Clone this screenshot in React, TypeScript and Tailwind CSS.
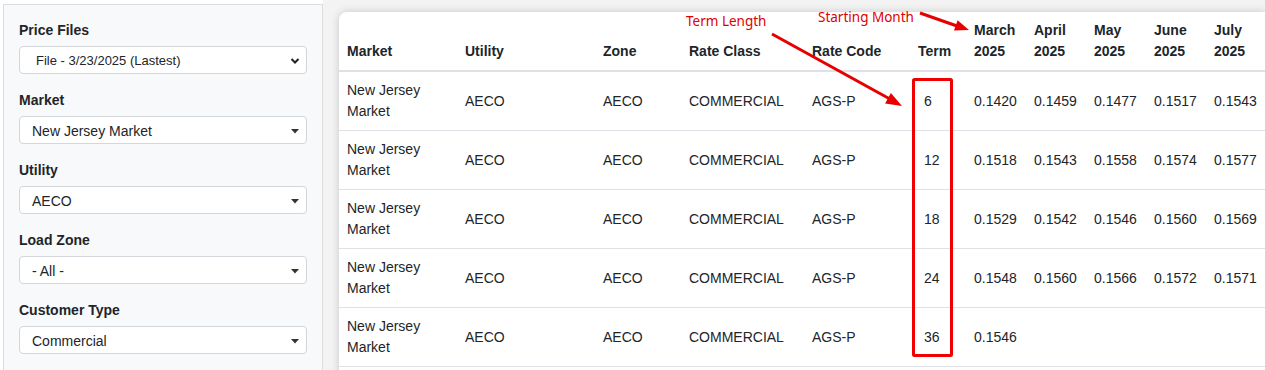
import type { ReactNode } from 'react';

const months = ['March', 'April', 'May', 'June', 'July'];

const rows = [
  { term: 6, prices: ['0.1420', '0.1459', '0.1477', '0.1517', '0.1543'] },
  { term: 12, prices: ['0.1518', '0.1543', '0.1558', '0.1574', '0.1577'] },
  { term: 18, prices: ['0.1529', '0.1542', '0.1546', '0.1560', '0.1569'] },
  { term: 24, prices: ['0.1548', '0.1560', '0.1566', '0.1572', '0.1571'] },
  { term: 36, prices: ['0.1546'] },
];

function Field({ label, children }: { label: string; children: ReactNode }) {
  return (
    <div className="mb-[16px]">
      <div className="mb-[5px] text-[14px] leading-[21px] font-bold">{label}</div>
      {children}
    </div>
  );
}

// native-looking select (chevron)
function NativeSelect({ value }: { value: string }) {
  return (
    <div className="flex h-[28px] items-center justify-between rounded-[4px] border border-[#d3d6da] bg-white pt-[2px] pr-[6px] pl-[16px] text-[13px]">
      <span>{value}</span>
      <svg width="10" height="8" viewBox="0 0 10 8">
        <path d="M1.5 2 L5 5.5 L8.5 2" fill="none" stroke="#222" strokeWidth="2" />
      </svg>
    </div>
  );
}

// select2-style (small caret)
function Select2({ value }: { value: string }) {
  return (
    <div className="flex h-[28px] items-center justify-between rounded-[4px] border border-[#d3d6da] bg-white pt-[2px] pr-[7px] pl-[12px] text-[14px]">
      <span>{value}</span>
      <svg width="8" height="5" viewBox="0 0 8 5">
        <path d="M0 0 L8 0 L4 4.5 Z" fill="#333" />
      </svg>
    </div>
  );
}

export default function App() {
  return (
    <div className="relative flex h-[370px] w-[1265px] overflow-hidden bg-white font-['Liberation_Sans',Arial,sans-serif] text-[14px] text-[#212529]">
      <aside className="mt-[4px] ml-[3px] h-[400px] w-[320px] shrink-0 border border-[#dcdcdc] bg-[#f8f9fa] px-[15px] pt-[15px]">
        <Field label="Price Files">
          <NativeSelect value="File - 3/23/2025 (Lastest)" />
        </Field>
        <Field label="Market">
          <Select2 value="New Jersey Market" />
        </Field>
        <Field label="Utility">
          <Select2 value="AECO" />
        </Field>
        <Field label="Load Zone">
          <Select2 value="- All -" />
        </Field>
        <Field label="Customer Type">
          <Select2 value="Commercial" />
        </Field>
      </aside>

      <main className="min-w-0 flex-1 bg-[#f3f3f3] pt-[12px] pl-[16px]">
        <div className="h-[400px] overflow-hidden rounded-tl-lg bg-white shadow-[0_0_8px_rgba(0,0,0,0.18)]">
          <table className="w-full table-fixed border-collapse text-left">
            <colgroup>
              <col className="w-[118px]" />
              <col className="w-[138px]" />
              <col className="w-[86px]" />
              <col className="w-[123px]" />
              <col className="w-[106px]" />
              <col className="w-[56px]" />
              {months.map((m) => (
                <col key={m} className="w-[60px]" />
              ))}
            </colgroup>
            <thead>
              <tr className="border-b-2 border-[#dee2e6]">
                {['Market', 'Utility', 'Zone', 'Rate Class', 'Rate Code', 'Term'].map((h) => (
                  <th key={h} className="p-2 align-bottom leading-[21px] font-bold whitespace-nowrap">
                    {h}
                  </th>
                ))}
                {months.map((m) => (
                  <th key={m} className="p-2 align-bottom leading-[21px] font-bold">
                    {m}
                    <br />
                    2025
                  </th>
                ))}
              </tr>
            </thead>
            <tbody>
              {rows.map((r) => (
                <tr key={r.term} className="border-b border-[#dee2e6]">
                  <td className="p-2 align-middle leading-[21px]">
                    New Jersey
                    <br />
                    Market
                  </td>
                  <td className="p-2 leading-[21px]">AECO</td>
                  <td className="p-2 leading-[21px]">AECO</td>
                  <td className="p-2 leading-[21px]">COMMERCIAL</td>
                  <td className="p-2 leading-[21px]">AGS-P</td>
                  <td className="py-2 pl-[14px] leading-[21px]">{r.term}</td>
                  {months.map((m, i) => (
                    <td key={m} className="p-2 leading-[21px]">
                      {r.prices[i] ?? ''}
                    </td>
                  ))}
                </tr>
              ))}
            </tbody>
          </table>
        </div>
      </main>

      {/* annotations drawn over the screenshot */}
      <svg className="pointer-events-none absolute top-0 left-0" width="1265" height="370">
        <line x1="772" y1="34" x2="889" y2="98.5" stroke="#e80000" strokeWidth="3" />
        <polygon points="902,106 885.1,103.5 890.9,93" fill="#e80000" />
        <line x1="920" y1="13" x2="957" y2="26" stroke="#e80000" strokeWidth="3" />
        <polygon points="969,30 954,30.6 957.6,20.2" fill="#e80000" />
        <rect x="913.5" y="79.5" width="38" height="276" rx="1" fill="none" stroke="#f00000" strokeWidth="3" />
      </svg>
      <span className="absolute top-[12px] left-[686px] font-['Noto_Sans',sans-serif] text-[13.5px] leading-[18px] text-[#e00000]">
        Term Length
      </span>
      <span className="absolute top-[8px] left-[818px] font-['Noto_Sans',sans-serif] text-[13.5px] leading-[18px] text-[#e00000]">
        Starting Month
      </span>
    </div>
  );
}
